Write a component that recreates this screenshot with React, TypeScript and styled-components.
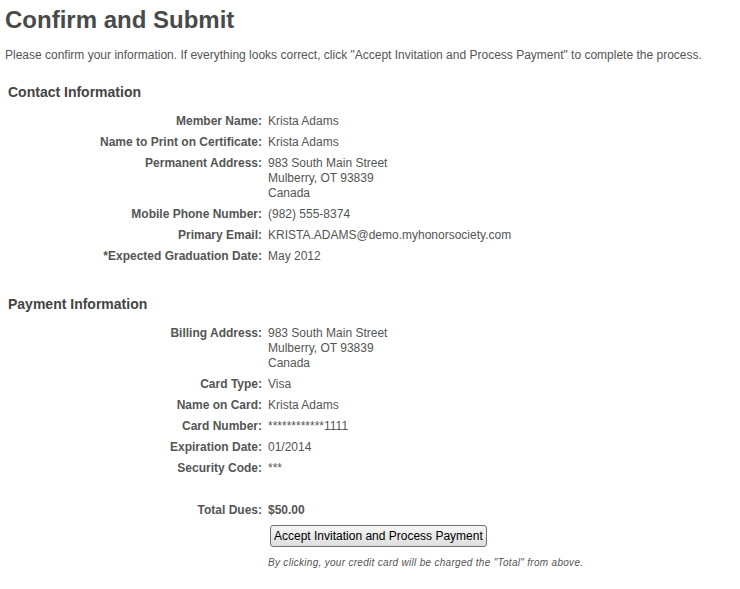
import React from 'react'
import styled, { createGlobalStyle } from 'styled-components'

type Field = { label: string; value: string[] }

const contactFields: Field[] = [
  { label: 'Member Name:', value: ['Krista Adams'] },
  { label: 'Name to Print on Certificate:', value: ['Krista Adams'] },
  { label: 'Permanent Address:', value: ['983 South Main Street', 'Mulberry, OT 93839', 'Canada'] },
  { label: 'Mobile Phone Number:', value: ['(982) 555-8374'] },
  { label: 'Primary Email:', value: ['KRISTA.ADAMS@demo.myhonorsociety.com'] },
  { label: '*Expected Graduation Date:', value: ['May 2012'] },
]

const paymentFields: Field[] = [
  { label: 'Billing Address:', value: ['983 South Main Street', 'Mulberry, OT 93839', 'Canada'] },
  { label: 'Card Type:', value: ['Visa'] },
  { label: 'Name on Card:', value: ['Krista Adams'] },
  { label: 'Card Number:', value: ['************1111'] },
  { label: 'Expiration Date:', value: ['01/2014'] },
  { label: 'Security Code:', value: ['***'] },
]

const FieldList: React.FC<{ fields: Field[] }> = ({ fields }) => (
  <Fields>
    {fields.map(f => (
      <React.Fragment key={f.label}>
        <Label>{f.label}</Label>
        <Value>
          {f.value.map(line => (
            <div key={line}>{line}</div>
          ))}
        </Value>
      </React.Fragment>
    ))}
  </Fields>
)

const App: React.FC = () => {
  return (
    <Page>
      <GlobalStyle />
      <Title>Confirm and Submit</Title>
      <Intro>
        Please confirm your information. If everything looks correct, click "Accept Invitation and Process Payment" to
        complete the process.
      </Intro>

      <SectionTitle>Contact Information</SectionTitle>
      <FieldList fields={contactFields} />

      <SectionTitle $spaced>Payment Information</SectionTitle>
      <FieldList fields={paymentFields} />

      <Fields $spaced>
        <Label>Total Dues:</Label>
        <Total>$50.00</Total>
        <span />
        <Actions>
          <SubmitButton type="button">Accept Invitation and Process Payment</SubmitButton>
          <Note>By clicking, your credit card will be charged the "Total" from above.</Note>
        </Actions>
      </Fields>
    </Page>
  )
}

export default App

const GlobalStyle = createGlobalStyle`
  body {
    margin: 0;
    background: #fff;
    font-family: "Liberation Sans", Arial, sans-serif;
    color: #555;
  }
`

const Page = styled.div`
  padding: 5px 5px 0 5px;
`

const Title = styled.h1`
  margin: 0;
  font-size: 24px;
  line-height: 30px;
  font-weight: bold;
  color: #4a4a4a;
`

const Intro = styled.p`
  margin: 13px 0 0 0;
  font-size: 12px;
  line-height: 15px;
`

const SectionTitle = styled.h2<{ $spaced?: boolean }>`
  margin: ${p => (p.$spaced ? '32px' : '21px')} 0 0 3px;
  font-size: 14px;
  line-height: 17px;
  font-weight: bold;
  color: #444;
`

const Fields = styled.div<{ $spaced?: boolean }>`
  display: grid;
  grid-template-columns: 257px 1fr;
  column-gap: 6px;
  row-gap: 6px;
  margin-top: ${p => (p.$spaced ? '27px' : '13px')};
  font-size: 12px;
  line-height: 15px;
`

const Label = styled.div`
  text-align: right;
  font-weight: bold;
`

const Value = styled.div``

const Total = styled.div`
  font-weight: bold;
`

const Actions = styled.div`
  display: flex;
  flex-direction: column;
  align-items: flex-start;
  padding-top: 1px;
`

const SubmitButton = styled.button`
  margin-left: 2px;
  height: 22px;
  padding: 0 3px;
  font-family: "Liberation Sans", Arial, sans-serif;
  font-size: 12px;
  color: #000;
  background: linear-gradient(#f6f6f6, #dedede);
  border: 1px solid #707070;
  border-radius: 3px;
`

const Note = styled.div`
  margin-top: 8px;
  font-size: 10px;
  letter-spacing: 0.3px;
  font-style: italic;
  color: #555;
`
